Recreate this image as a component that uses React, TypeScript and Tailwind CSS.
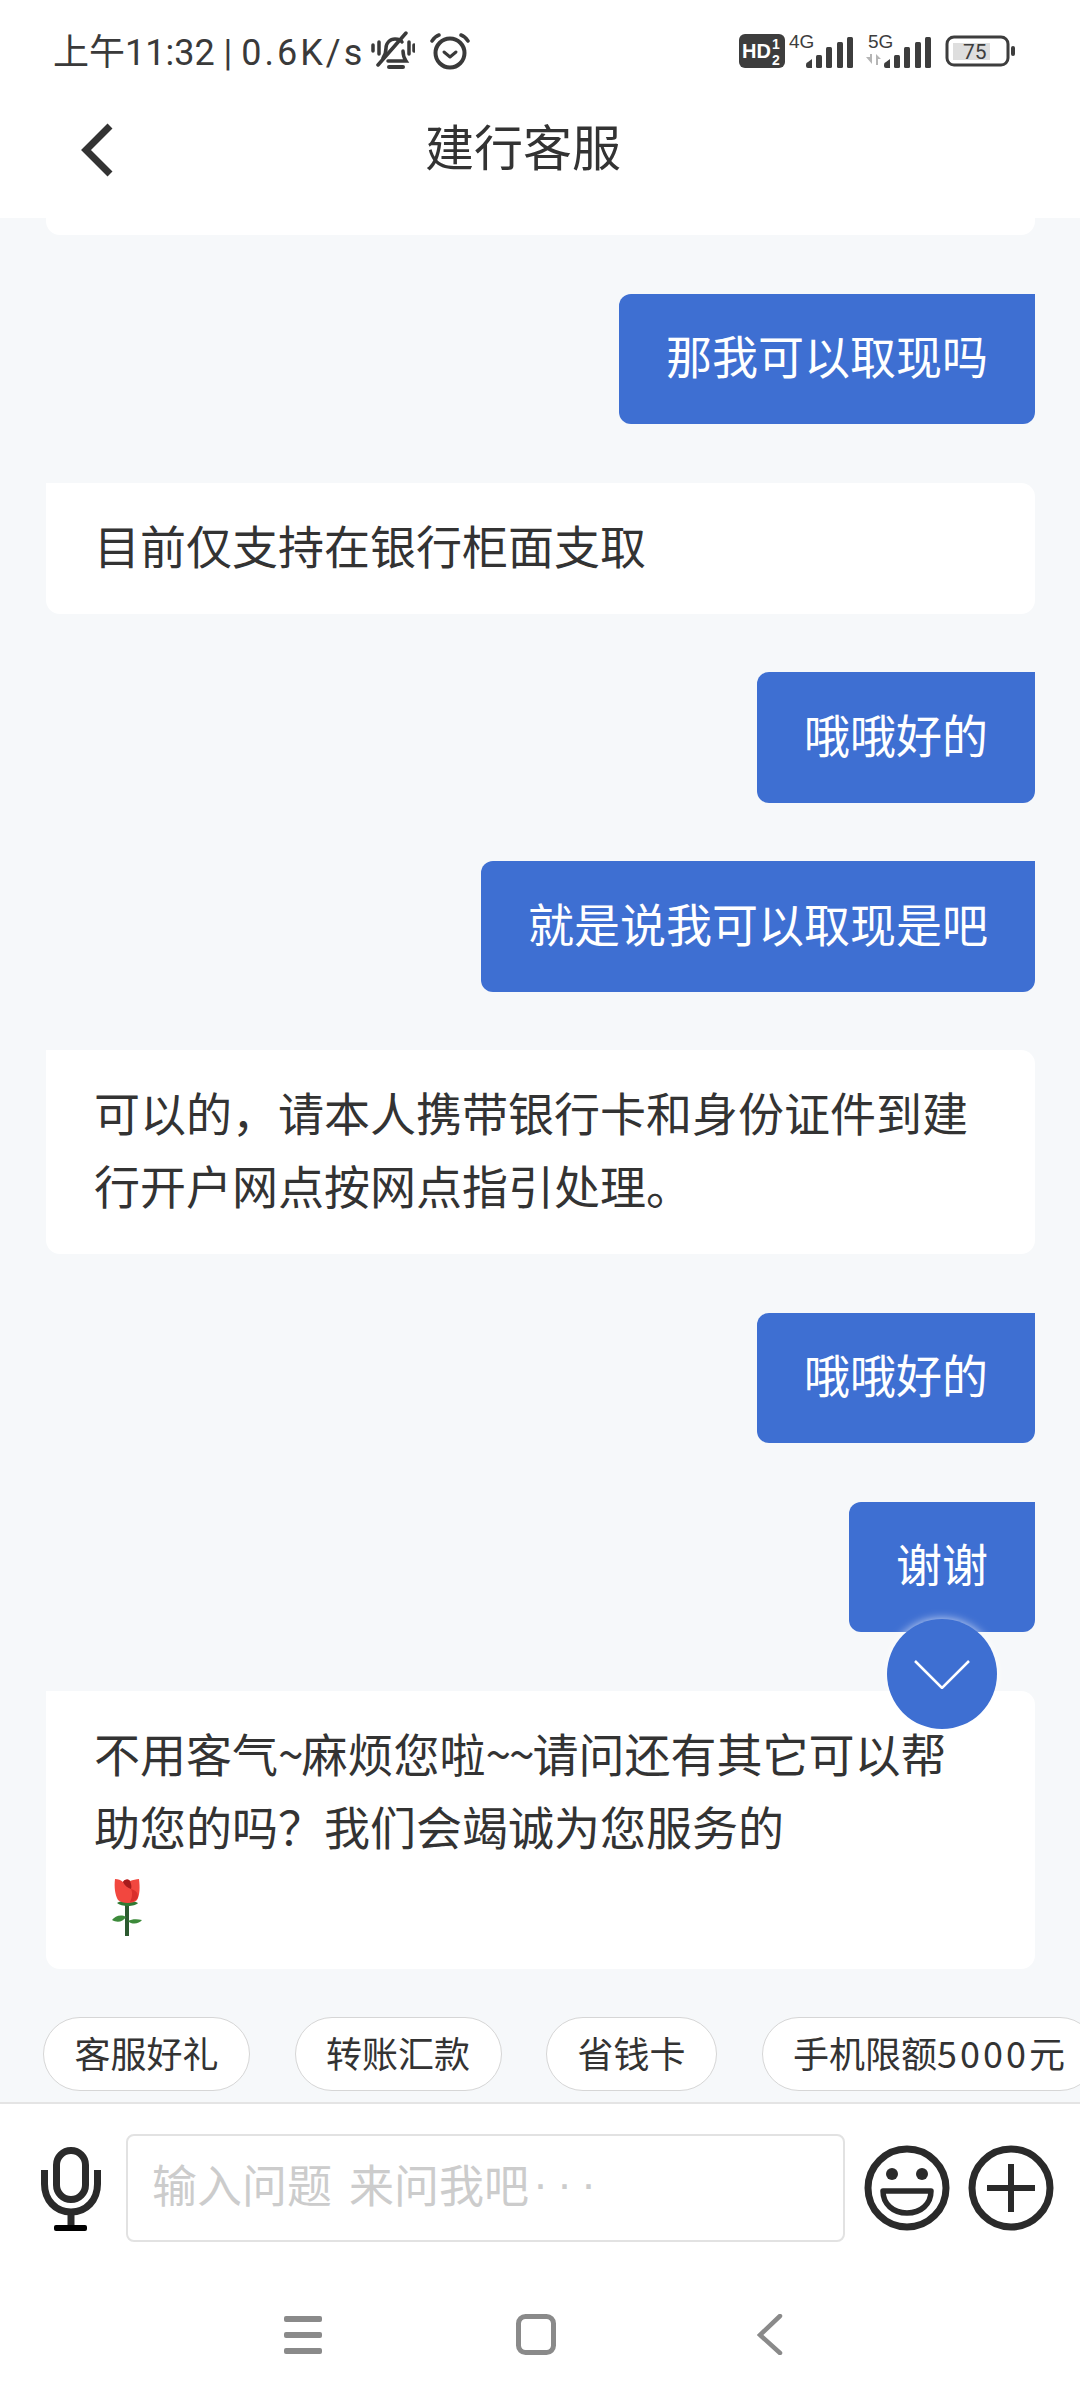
const CJK = "font-['Noto_Sans_CJK_SC','Liberation_Sans',sans-serif]"

const Signal = ({ x = 0 }: { x?: number }) => (
    <g transform={`translate(${x} 0)`} fill="#3d3d3d">
        <path d="M0 29 a3 3 0 0 1 2-3 l4-3 v9 h-4 a2 2 0 0 1-2-2z" />
        <rect x="10" y="19" width="6" height="13" rx="1.5" />
        <rect x="20" y="11" width="6" height="21" rx="1.5" />
        <rect x="31" y="6" width="6" height="26" rx="1.5" />
        <rect x="41" y="1" width="6" height="31" rx="1.5" />
    </g>
)

const StatusBar = () => (
    <div className="flex h-[100px] items-center justify-between pl-[53px] pr-[64px] pt-[2px] text-[#3a3a3a]">
        <div className="flex items-center">
            <span className="pt-[3px] font-['Roboto','Noto_Sans_CJK_SC',sans-serif] text-[36px] leading-[40px] whitespace-nowrap">
                上午11:32 | <span className="tracking-[3px]">0.6K/s</span>
            </span>
            <svg className="ml-[6px]" width="44" height="40" viewBox="0 0 44 40" fill="none" stroke="#3a3a3a" strokeWidth="3.5" strokeLinecap="round">
                <path d="M12 27c2-3 3-6 3-10 0-5 4-9 9-9 3 0 6 1 7 3" />
                <path d="M17 30h18c-2-3-3-6-3-10" />
                <path d="M35 2L7 34" />
                <path d="M2 14v6M8 11v12M38 11v12M43 14v6" />
                <path d="M18 36h14" strokeWidth="4" />
            </svg>
            <svg className="ml-[15px]" width="40" height="38" viewBox="0 0 40 38" fill="none" stroke="#3a3a3a" strokeWidth="4" strokeLinecap="round">
                <circle cx="20" cy="21" r="14.5" />
                <path d="M14 20l6 5 6-5" strokeWidth="3" strokeLinejoin="round" />
                <path d="M2 9c2-3 4-5 7-6M38 9c-2-3-4-5-7-6" strokeWidth="3.5" />
            </svg>
        </div>
        <svg width="277" height="40" viewBox="0 0 277 40" className="shrink-0">
            <rect x="0" y="3" width="46" height="34" rx="6" fill="#3d3d3d" />
            <text x="3" y="27" fontSize="20" fontWeight="700" fill="#fff" fontFamily="Liberation Sans">HD</text>
            <text x="33" y="18" fontSize="14" fontWeight="700" fill="#fff" fontFamily="Liberation Sans">1</text>
            <text x="33" y="34" fontSize="14" fontWeight="700" fill="#fff" fontFamily="Liberation Sans">2</text>
            <text x="50" y="17" fontSize="19" fill="#3d3d3d" fontFamily="Liberation Sans">4G</text>
            <g transform="translate(67 5)"><Signal /></g>
            <text x="129" y="17" fontSize="19" fill="#3d3d3d" fontFamily="Liberation Sans">5G</text>
            <path d="M127 26h4v-3h2v10l-6-7zM137 34v-11l5 5h-3v6z" fill="#b5b5b5" />
            <g transform="translate(145 5)"><Signal /></g>
            <rect x="208" y="6" width="61" height="28" rx="7" fill="#fff" stroke="#3d3d3d" strokeWidth="3" />
            <rect x="214" y="12" width="37" height="17" fill="#dedede" />
            <text x="224" y="28" fontSize="21" fill="#3d3d3d" fontFamily="Roboto">75</text>
            <rect x="272" y="15" width="4" height="10" rx="2" fill="#3d3d3d" />
        </svg>
    </div>
)

const Header = () => (
    <div className="flex h-[118px] items-start pl-[81px]">
        <svg className="mt-[23px] shrink-0" width="32" height="54" viewBox="0 0 32 54" fill="none" stroke="#333" strokeWidth="7">
            <path d="M29 3L5 27l24 24" />
        </svg>
        <h1 className={`ml-[312px] mt-[15px] text-[49px] leading-[60px] text-[#333] whitespace-nowrap ${CJK}`}>建行客服</h1>
    </div>
)

const Mine = ({ text }: { text: string }) => (
    <div className="self-end flex h-[130.5px] shrink-0 items-center rounded-[12px] rounded-tr-none bg-[#3e6fd2] px-[47px] pb-[8px] text-[46px] text-white whitespace-nowrap">
        {text}
    </div>
)

const Reply = ({ children }: { children: React.ReactNode }) => (
    <div className="shrink-0 rounded-[14px] rounded-tl-none bg-white pl-[48px] pt-[25px] pb-[33px] text-[46px] leading-[73px] text-[#333]">
        {children}
    </div>
)

const Rose = () => (
    <svg className="ml-[18px]" width="30" height="58" viewBox="0 0 30 58">
        <rect x="13" y="24" width="4" height="34" fill="#2c5a30" />
        <path d="M14 39C9 36 3 38 0 42c5 3 11 2 14-3zM16 43c4-2 9-2 14-1-3 4-10 5-14 1z" fill="#3c8a3a" />
        <path d="M5 25c4-3 16-3 21 0-3 4-17 4-21 0z" fill="#2f7a33" />
        <path d="M3 1c3 0 6 1 8 3 2-3 5-3 7-1 3-1 6-2 9-2 1 8 1 16-2 21-3 4-15 4-19 0C3 17 2 9 3 1z" fill="#f2473f" />
        <path d="M11 4c2-3 5-3 7-1 1 3 2 5 1 8-3-1-6-3-8-7z" fill="#a61c1c" />
        <path d="M19 11c2 4 1 9-1 13 4-1 7-2 8-5 0-5-3-7-7-8z" fill="#d92f2c" />
    </svg>
)

const ScrollDown = () => (
    <div className="absolute left-[887px] top-[1401px] flex h-[110px] w-[110px] items-center justify-center rounded-full bg-[#3e6fd2] shadow-[0_0_10px_rgba(255,255,255,0.75)]">
        <svg width="58" height="30" viewBox="0 0 58 30" fill="none" stroke="#fff" strokeWidth="2.5">
            <path d="M2 2l27 27L56 2" />
        </svg>
    </div>
)

const App = () => {
    return (
        <div className={`flex h-[2400px] w-[1080px] flex-col overflow-hidden bg-white ${CJK}`}>
            <StatusBar />
            <Header />

            {/* Chat */}
            <div className="relative flex h-[1884px] flex-col overflow-hidden bg-[#f6f8fa]">
                <div className="flex flex-1 flex-col gap-[58.5px] overflow-hidden pl-[46px] pr-[45px]">
                    <div className="h-[17px] shrink-0 rounded-b-[14px] bg-white" />
                    <Mine text="那我可以取现吗" />
                    <Reply>目前仅支持在银行柜面支取</Reply>
                    <Mine text="哦哦好的" />
                    <Mine text="就是说我可以取现是吧" />
                    <Reply>可以的，请本人携带银行卡和身份证件到建<br />行开户网点按网点指引处理。</Reply>
                    <Mine text="哦哦好的" />
                    <Mine text="谢谢" />
                    <Reply>
                        不用客气<span className="tracking-[-2px]">~</span>麻烦您啦<span className="tracking-[-2px]">~~</span>请问还有其它可以帮<br />助您的吗？我们会竭诚为您服务的
                        <div className="h-[74px] pt-[16px]"><Rose /></div>
                    </Reply>
                </div>
                <ScrollDown />

                {/* Quick replies */}
                <div className="flex shrink-0 gap-[44.5px] pl-[43px] pb-[11px]">
                    <div className="flex h-[74px] shrink-0 items-center rounded-[37px] border border-[#d6d6d6] bg-white px-[30.5px] pb-[4px] text-[36px] text-[#333] whitespace-nowrap">客服好礼</div>
                    <div className="flex h-[74px] shrink-0 items-center rounded-[37px] border border-[#d6d6d6] bg-white px-[30.5px] pb-[4px] text-[36px] text-[#333] whitespace-nowrap">转账汇款</div>
                    <div className="flex h-[74px] shrink-0 items-center rounded-[37px] border border-[#d6d6d6] bg-white px-[30.5px] pb-[4px] text-[36px] text-[#333] whitespace-nowrap">省钱卡</div>
                    <div className="flex h-[74px] shrink-0 items-center rounded-[37px] border border-[#d6d6d6] bg-white px-[30.5px] pb-[4px] text-[36px] text-[#333] whitespace-nowrap">
                        手机限额<span className="tracking-[3px]">5000</span>元
                    </div>
                </div>
            </div>

            {/* Input */}
            <div className="flex h-[179px] shrink-0 items-start border-t-2 border-[#e4e4e4] pt-[30px]">
                <svg className="ml-[40px] mt-[13px] shrink-0" width="62" height="84" viewBox="0 0 62 84" fill="none" stroke="#2a2a2a" strokeWidth="7">
                    <rect x="16.5" y="3.5" width="29" height="49" rx="14.5" />
                    <path d="M4.5 23v14c0 16 11 28 26.5 28s26.5-12 26.5-28V23" />
                    <path d="M31 66v14" />
                    <rect x="14" y="78" width="33" height="6" rx="2" fill="#000" stroke="none" />
                </svg>
                <div className="ml-[24px] flex h-[108px] w-[719px] shrink-0 items-center rounded-[8px] border-2 border-[#e2e2e2] pb-[8px] pl-[24px] text-[45px] text-[#ccc] whitespace-pre">
                    输入问题<span className="w-[17px]" />来问我吧<span className="ml-[4px] font-['Liberation_Sans',sans-serif] tracking-[9px]">···</span>
                </div>
                <svg className="ml-[19px] mt-[11px] shrink-0" width="86" height="86" viewBox="0 0 86 86" fill="none" stroke="#2a2a2a" strokeWidth="7">
                    <circle cx="43" cy="43" r="39" />
                    <circle cx="28" cy="29" r="6" fill="#2a2a2a" stroke="none" />
                    <circle cx="58" cy="29" r="6" fill="#2a2a2a" stroke="none" />
                    <path d="M19 46h48c0 13-10 22-24 22S19 59 19 46z" strokeWidth="5.5" strokeLinejoin="round" />
                </svg>
                <svg className="ml-[18px] mt-[11px] shrink-0" width="86" height="86" viewBox="0 0 86 86" fill="none" stroke="#2a2a2a" strokeWidth="7">
                    <circle cx="43" cy="43" r="39" />
                    <path d="M19 43h48M43 19v48" strokeWidth="6" />
                </svg>
            </div>

            {/* Nav */}
            <div className="flex h-[118px] shrink-0 items-start pt-[33px]">
                <svg className="ml-[284px] mt-[2px]" width="38" height="38" viewBox="0 0 38 38" fill="#8a8a8a">
                    <rect y="0" width="38" height="6" rx="2" />
                    <rect y="16" width="38" height="6" rx="2" />
                    <rect y="32" width="38" height="6" rx="2" />
                </svg>
                <svg className="ml-[194px]" width="40" height="41" viewBox="0 0 40 41" fill="none" stroke="#8a8a8a" strokeWidth="5">
                    <rect x="2.5" y="2.5" width="35" height="36" rx="7" />
                </svg>
                <svg className="ml-[201px]" width="26" height="41" viewBox="0 0 26 41" fill="none" stroke="#8a8a8a" strokeWidth="4.5" strokeLinecap="round">
                    <path d="M23 2L3 21l20 18" />
                </svg>
            </div>
        </div>
    )
}

export default App
